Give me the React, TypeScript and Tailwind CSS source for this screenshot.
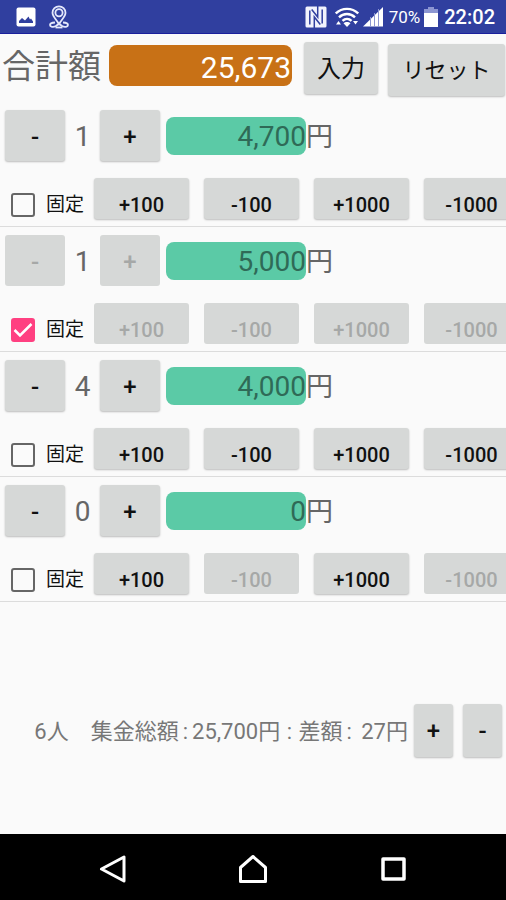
import { useState } from "react";
import type { ReactNode } from "react";
import clsx from "clsx";

type Group = {
  id: number;
  people: number;
  amount: number;
  fixed: boolean;
};

const initialGroups: Group[] = [
  { id: 1, people: 1, amount: 4700, fixed: false },
  { id: 2, people: 1, amount: 5000, fixed: true },
  { id: 3, people: 4, amount: 4000, fixed: false },
  { id: 4, people: 0, amount: 0, fixed: false },
];

const steps = [100, -100, 1000, -1000];

const yen = (n: number) => n.toLocaleString("en-US");

function StatusBar() {
  return (
    <div className="flex h-[34px] shrink-0 items-center border-b border-[#1a1f9c] bg-[#303f9f] pr-[11px] pl-4 text-white">
      <svg width="20" height="20" viewBox="0 0 20 20" className="mr-3">
        <rect x="0.5" y="0.5" width="19" height="19" rx="2" fill="#fff" />
        <path d="M3 16v-2l3-3 3 2.500 3.500-4 1.500 3 1-1 2 3V16z" fill="#303f9f" />
      </svg>
      <svg width="22" height="24" viewBox="0 0 22 24" fill="none" stroke="#e4e8fb" strokeWidth="1.8">
        <path d="M11 19C8 14 4.500 11.500 4.500 7.800a6.500 6.500 0 0 1 13 0C17.500 11.500 14 14 11 19z" />
        <circle cx="11" cy="7.800" r="3.600" />
        <path d="M7 17.500c-3 .2-5 .9-5 2.500 0 2 3.500 2.300 5.500 1.300 1.500-.7 2.500-2.300 3.500-2.300s2 1.600 3.500 2.300c2 1 5.500.7 5.500-1.300 0-1.600-2-2.300-5-2.500" />
        <path d="M7.500 22.500h7" />
      </svg>
      <div className="ml-auto flex items-center">
        <svg width="22" height="22" viewBox="0 0 22 22" className="mr-2">
          <rect x="0.500" y="0.500" width="21" height="21" rx="1.500" fill="#f2f3fd" />
          <path
            d="M4.800 18.500V4.500M9.300 22V11l6 7.500M17.200 3.500v14M12.700 0v11l-6-7.500"
            stroke="#303f9f"
            strokeWidth="1.500"
            fill="none"
          />
        </svg>
        <svg width="24" height="20" viewBox="0 0 24 20" fill="none" stroke="#fff" strokeWidth="2.400" className="mr-1">
          <path d="M.8 6.500C7 .3 17 .3 23.200 6.500" />
          <path d="M4 10.300c4.500-4.400 11.500-4.400 16 0" />
          <path d="M7.500 13.800c2.600-2.500 6.400-2.500 9 0" />
          <path d="M12 20l-3.500-3.800c1.900-1.700 5.100-1.700 7 0z" fill="#fff" stroke="none" />
          <path d="M1 17.500l2.500-3.500 2.500 3.500zM18 14l2.500 3.500L23 14z" fill="#fff" stroke="none" />
        </svg>
        <svg width="20" height="20" viewBox="0 0 20 20" className="mr-1.5">
          <path d="M0 19.500L20 0v19.500z" fill="#fff" />
          <path d="M7.500 10v10M11.500 6v14M15.500 2v18" stroke="#8c96d2" strokeWidth="1" />
        </svg>
        <span className="mr-1 text-[17px] leading-5">70%</span>
        <svg width="14" height="20" viewBox="0 0 14 20" className="mr-1.5">
          <path d="M4 0h6v2h4v4H0V2h4z" fill="#8c96d2" />
          <path d="M0 6h14v14H0z" fill="#fff" />
        </svg>
        <span className="text-[20px] leading-5 font-medium">22:02</span>
      </div>
    </div>
  );
}

type KeyProps = {
  children: ReactNode;
  className: string;
  disabled?: boolean;
  label?: string;
  onClick?: () => void;
};

function Key({ children, className, disabled, label, onClick }: KeyProps) {
  return (
    <button
      type="button"
      aria-label={label}
      disabled={disabled}
      onClick={onClick}
      className={clsx(
        "flex shrink-0 justify-center rounded-[3px] bg-[#d6d8d7]",
        disabled ? "text-[#a6a8a7]" : "text-[#111] shadow-[0_1px_2px_rgba(0,0,0,0.25)]",
        className,
      )}
    >
      {children}
    </button>
  );
}

function GroupRow({ group, onChange }: { group: Group; onChange: (g: Group) => void }) {
  const { people, amount, fixed } = group;

  return (
    <li className="overflow-hidden border-b border-[#dcdcdc] pt-2 pb-[7px]">
      <div className="flex items-center pl-[5px]">
        <Key
          className="h-[51px] w-[60px] items-center pt-0.5 text-[24px] font-medium"
          label="人数を減らす"
          disabled={fixed}
          onClick={() => onChange({ ...group, people: Math.max(0, people - 1) })}
        >
          -
        </Key>
        <span className="w-[35px] pt-0.5 text-center text-[28px] leading-8 text-[#666]">{people}</span>
        <Key
          className="h-[51px] w-[60px] items-center pt-0.5 text-[24px] font-medium"
          label="人数を増やす"
          disabled={fixed}
          onClick={() => onChange({ ...group, people: people + 1 })}
        >
          +
        </Key>
        <span className="ml-1.5 h-[38px] w-[140px] rounded-lg bg-[#5bcaa6] text-right text-[28px] leading-10 text-[#2f6a57]">
          {yen(amount)}
        </span>
        <span className="pt-0.5 text-[27px] leading-8 text-[#666]">円</span>
      </div>
      <div className="mt-[17px] flex pl-[11px]">
        <label className="flex w-[83px] shrink-0 items-center gap-[11px] pt-3 text-[19px] leading-6 text-[#111]">
          <span className="relative flex">
            <input
              type="checkbox"
              checked={fixed}
              onChange={(e) => onChange({ ...group, fixed: e.target.checked })}
              className="peer size-6 appearance-none rounded-[3px] border-2 border-[#666] checked:border-[#ff4081] checked:bg-[#ff4081]"
            />
            <svg
              viewBox="0 0 24 24"
              className="pointer-events-none absolute inset-0 hidden size-6 peer-checked:block"
              fill="none"
              stroke="#fff"
              strokeWidth="2.500"
            >
              <path d="M3.500 12l5.500 5.500L20.500 6" />
            </svg>
          </span>
          固定
        </label>
        <div className="flex gap-[15px]">
          {steps.map((step) => (
            <Key
              key={step}
              className="h-[41px] w-[95px] items-end pb-0.5 text-[20px] leading-6 font-medium"
              disabled={fixed || amount + step < 0}
              onClick={() => onChange({ ...group, amount: amount + step })}
            >
              {step > 0 ? `+${step}` : step}
            </Key>
          ))}
        </div>
      </div>
    </li>
  );
}

export default function App() {
  const [total, setTotal] = useState(25673);
  const [groups, setGroups] = useState(initialGroups);

  const people = groups.reduce((sum, g) => sum + g.people, 0);
  const collected = groups.reduce((sum, g) => sum + g.people * g.amount, 0);

  const update = (next: Group) => setGroups(groups.map((g) => (g.id === next.id ? next : g)));

  const reset = () => {
    setTotal(0);
    setGroups(groups.map((g) => ({ ...g, people: 0, amount: 0, fixed: false })));
  };

  return (
    <div className="flex min-h-screen flex-col overflow-x-hidden bg-[#fafafa] font-[Roboto,'Noto_Sans_CJK_JP',sans-serif]">
      <StatusBar />

      {/* Total */}
      <header className="flex h-[68px] shrink-0 items-start pt-2 pr-px pl-0.5">
        <h1 className="mt-1 mr-2 text-[33px] leading-[42px] text-[#666]">合計額</h1>
        <span className="mt-[3px] mr-3 h-[41px] flex-1 rounded-lg bg-[#c87116] pr-px text-right text-[30px] leading-[46px] text-white">
          {yen(total)}
        </span>
        <Key className="mr-2.5 h-[52px] w-[74px] items-center pt-0.5 text-[24px]">入力</Key>
        <Key className="mt-0.5 h-[52px] w-[117px] items-center text-[22px]" onClick={reset}>
          リセット
        </Key>
      </header>

      {/* Groups */}
      <ul>
        {groups.map((group) => (
          <GroupRow key={group.id} group={group} onChange={update} />
        ))}
      </ul>

      {/* Summary */}
      <footer className="flex flex-1 items-center justify-end pt-6 pr-1">
        <p className="mr-1.5 pt-1 text-[22px] leading-8 whitespace-pre text-[#777]">
          {people}人　集金総額<span className="mx-1">:</span>
          {yen(collected)}円<span className="mx-px"> : </span>差額<span className="mx-1">: </span>
          {yen(collected - total)}円
        </p>
        <Key
          className="mr-2.5 h-[53px] w-[39px] items-center pt-0.5 text-[24px] font-medium"
          label="グループを追加"
          onClick={() =>
            setGroups([...groups, { id: groups.length + 1, people: 0, amount: 0, fixed: false }])
          }
        >
          +
        </Key>
        <Key
          className="h-[53px] w-[39px] items-center pt-0.5 text-[24px] font-medium"
          label="グループを削除"
          onClick={() => setGroups(groups.slice(0, -1))}
        >
          -
        </Key>
      </footer>

      {/* System navigation */}
      <nav className="flex h-[66px] shrink-0 items-center justify-center gap-28 bg-black pt-1">
        <button type="button" aria-label="戻る">
          <svg width="28" height="28" viewBox="0 0 28 28" fill="none" stroke="#fff" strokeWidth="3" strokeLinejoin="round">
            <path d="M25 2v24L2.500 14z" />
          </svg>
        </button>
        <button type="button" aria-label="ホーム">
          <svg width="28" height="28" viewBox="0 0 28 28" fill="none" stroke="#fff" strokeWidth="3" strokeLinejoin="round">
            <path d="M1.500 12.500L14 1.500l12.500 11v14h-25z" />
          </svg>
        </button>
        <button type="button" aria-label="アプリ履歴">
          <svg width="28" height="28" viewBox="0 0 28 28" fill="none" stroke="#fff" strokeWidth="3.500" strokeLinejoin="round">
            <path d="M4 4h21v20H4z" />
          </svg>
        </button>
      </nav>
    </div>
  );
}
